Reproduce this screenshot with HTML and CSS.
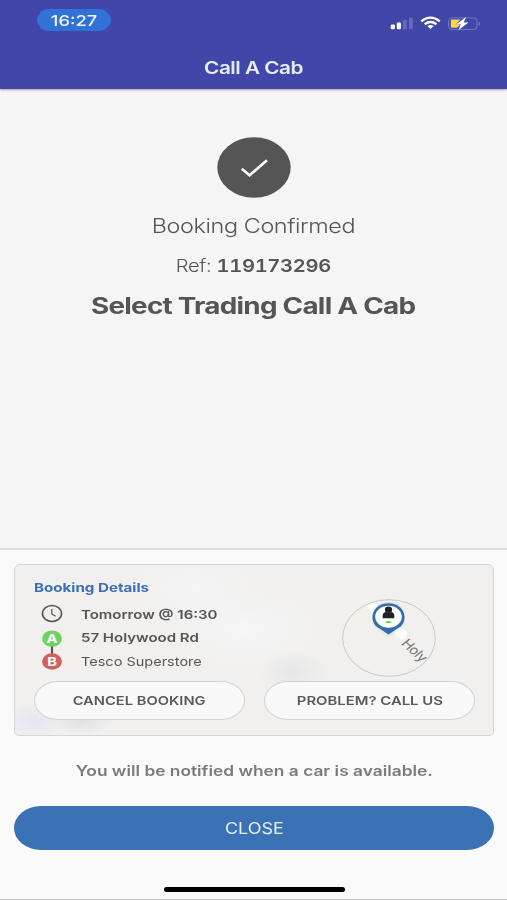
FILE: index.html
```html
<!DOCTYPE html>
<html lang="en">
<head>
<meta charset="utf-8">
<title>Call A Cab</title>
<link rel="stylesheet" href="styles.css">
</head>
<body>
<div class="screen">
  <header class="header">
    <div class="status">
      <div class="clock"><span class="wide time">16:27</span></div>
      <svg class="indicators" width="92" height="16" viewBox="0 0 92 16">
        <g fill="#fff">
          <rect x="0.7" y="9.6" width="4.2" height="4.6" rx="1.2"/>
          <rect x="6.800" y="7.6" width="4.2" height="6.600" rx="1.2"/>
          <rect x="13" y="5" width="3.8" height="9.2" rx="1" opacity=".2"/>
          <rect x="19" y="2.400" width="3.800" height="11.8" rx="1" opacity=".2"/>
        </g>
        <g fill="none" stroke="#fff" stroke-width="2.3">
          <path d="M31.2 6.3Q40.500 -1 49.800 6.3"/>
          <path d="M34.600 9.2Q40.500 4.9 46.400 9.2"/>
        </g>
        <path d="M37.3 11Q40.500 8.9 43.700 11L40.500 13.9Z" fill="#fff"/>
        <rect x="58.500" y="2.9" width="28.5" height="11.6" rx="3.5" fill="none" stroke="#7075bf"/>
        <path d="M88.500 6.6q3.6 2.1 0 4.2z" fill="#7075bf"/>
        <path d="M62 4.600H70.500L66 9.300L70 10L67 12.800H62q-1.200 0-1.200-1.200V5.800q0-1.200 1.200-1.200z" fill="#fbd34c"/>
        <path d="M76 2L66 9.600H70.800L68.500 14.900L78.500 7.400H73.800Z" fill="#fff"/>
      </svg>
    </div>
    <h1 class="title"><span class="wide title-text">Call A Cab</span></h1>
  </header>

  <main class="confirmation">
    <svg class="tick" width="74" height="61" viewBox="0 0 74 61">
      <ellipse cx="37" cy="30.500" rx="36.700" ry="30.200" fill="#555"/>
      <path d="M24.800 31.800L32.500 38.300L50 23.300" fill="none" stroke="#fff" stroke-width="2.600"/>
    </svg>
    <p class="confirmed"><span class="wide confirmed-text">Booking Confirmed</span></p>
    <p class="ref"><span class="wide ref-text">Ref: <b>119173296</b></span></p>
    <h2 class="company"><span class="wide company-text">Select Trading Call A Cab</span></h2>
  </main>

  <section class="panel">
    <div class="card">
      <h3 class="heading"><span class="wide heading-text">Booking Details</span></h3>
      <div class="summary">
        <svg class="route" width="22" height="68" viewBox="0 0 22 68">
          <ellipse cx="11" cy="9.500" rx="9.600" ry="8" fill="none" stroke="#555" stroke-width="1.700"/>
          <path d="M10.800 5V10L14.600 12.200" fill="none" stroke="#555" stroke-width="1.300"/>
          <path d="M11 40V52" stroke="#555" stroke-width="2.200"/>
          <ellipse cx="11" cy="34.600" rx="9.900" ry="8.200" fill="#6fd263"/>
          <ellipse cx="11" cy="57.500" rx="9.900" ry="8.200" fill="#d45d60"/>
          <g class="stop" text-anchor="middle" fill="#fff">
            <text transform="translate(11 39) scale(1.22 1)">A</text>
            <text transform="translate(11 62) scale(1.22 1)">B</text>
          </g>
        </svg>
        <div class="lines">
          <div><span class="wide when">Tomorrow @ 16:30</span></div>
          <div><span class="wide pickup">57 Holywood Rd</span></div>
          <div><span class="wide dropoff">Tesco Superstore</span></div>
        </div>
        <svg class="map" width="94" height="78" viewBox="0 0 94 78">
          <defs>
            <clipPath id="lens"><ellipse cx="47" cy="39" rx="46.300" ry="38.300"/></clipPath>
            <filter id="soft" x="-30%" y="-30%" width="160%" height="160%"><feGaussianBlur stdDeviation="1.500"/></filter>
          </defs>
          <g clip-path="url(#lens)">
            <path d="M21 -1L63 38" stroke="#fcfcfd" stroke-width="9"/>
          </g>
          <text class="road" transform="translate(58.500 45) scale(1.180 1) rotate(47)">Holy</text>
          <ellipse cx="47" cy="39" rx="46.300" ry="38.300" fill="none" stroke="#c9c9c9"/>
          <path d="M46.500 37L32.500 26Q27.500 4 46.500 4Q65.500 4 60.500 26Z" fill="#aab" opacity=".4" filter="url(#soft)"/>
          <path d="M46.500 35.500L38 29.700C33 27.500 30.500 23.500 30.500 18.300C30.500 10.200 37.500 4.300 46.500 4.300S62.500 10.200 62.500 18.300C62.500 23.500 60 27.500 55 29.700Z" fill="#326cb0"/>
          <ellipse cx="46.500" cy="17.700" rx="13.300" ry="11" fill="#fff"/>
          <ellipse cx="46.500" cy="10.700" rx="3.600" ry="3.200" fill="#222"/>
          <path d="M40.700 19.300V16.500Q40.700 13 44.500 13Q46.500 14.500 48.500 13Q52.300 13 52.300 16.500V19.300Z" fill="#222"/>
          <path d="M43 24Q46.500 19.700 50 24Z" fill="#5fe246"/>
        </svg>
      </div>
      <div class="actions">
        <button class="action"><span class="wide cancel">CANCEL BOOKING</span></button>
        <button class="action"><span class="wide problem">PROBLEM? CALL US</span></button>
      </div>
    </div>
    <p class="notice"><span class="wide notice-text">You will be notified when a car is available.</span></p>
    <button class="close"><span class="wide close-text">CLOSE</span></button>
    <div class="home-bar"></div>
  </section>
</div>
</body>
</html>
```
FILE: styles.css
```css
* { box-sizing: border-box; margin: 0; padding: 0; }

body {
  font-family: Inter, "Liberation Sans", sans-serif;
  color: #555;
  background: #f5f5f5;
}

.screen {
  width: 507px;
  height: 900px;
  display: flex;
  flex-direction: column;
  overflow: hidden;
}

/* The typeface is set in an extended width throughout. */
.wide {
  display: inline-block;
  white-space: nowrap;
  transform: scaleX(1.22);
}

.header {
  height: 89px;
  flex: none;
  background: #4147a9;
  color: #fff;
  box-shadow: 0 1px 2px rgba(0, 0, 0, .35);
}

.status {
  display: flex;
  justify-content: space-between;
  padding: 9px 25px 0 37px;
  height: 55px;
}

.clock {
  width: 74px;
  height: 22px;
  border-radius: 13px / 11px;
  background: #3072d7;
  text-align: center;
  line-height: 22px;
}

.time { font-size: 15px; font-weight: 500; color: #f0f5ff; }
.indicators { margin-top: 6px; }
.title { text-align: center; line-height: 27px; font-size: 17px; }
.title-text { font-weight: 600; color: #e8edff; letter-spacing: -.4px; }

.confirmation {
  height: 459px;
  flex: none;
  display: flex;
  flex-direction: column;
  align-items: center;
  padding-top: 48px;
}

.confirmed { margin-top: 13px; height: 30px; line-height: 30px; font-size: 19.700px; font-weight: 300; letter-spacing: -.35px; }
.confirmed-text { transform: scaleX(1.19); }
.ref { margin-top: 10px; height: 30px; line-height: 30px; font-size: 17.500px; font-weight: 300; letter-spacing: -.3px; }
.ref b { font-weight: 600; font-variant-numeric: tabular-nums; }
.ref-text { transform: scaleX(1.152); }
.company { margin-top: 9px; height: 32px; line-height: 32px; font-size: 22.500px; font-weight: 700; letter-spacing: -.6px; }
.company-text { transform: scaleX(1.237); }

.panel {
  flex: 1;
  display: flex;
  flex-direction: column;
  padding: 14px 13px 0 14px;
  background: #fafafa;
  border-top: 2px solid #dcdcdc;
  border-bottom: 1px solid #c8c8c8;
}

.card {
  height: 172px;
  flex: none;
  padding: 13px 19px 0;
  border: 1.500px solid #d5d5d5;
  border-radius: 6px 6px 5px 5px;
  background:
    radial-gradient(ellipse 32px 18px at 18px 156px, #e3e5f2, transparent),
    radial-gradient(ellipse 30px 14px at 66px 156px, #dfe0e3, transparent),
    radial-gradient(ellipse 34px 22px at 278px 108px, #e6e6e6, transparent),
    radial-gradient(ellipse 75px 38px at 230px 64px, #f6f6f6, transparent),
    radial-gradient(ellipse 60px 35px at 178px 24px, #f5f5f5, transparent),
    #f1f0ef;
}

.heading { height: 20px; line-height: 20px; font-size: 12.300px; }
.heading-text { color: #3b70b7; font-weight: 700; transform: scaleX(1.230); transform-origin: left; }

.summary { display: flex; height: 82px; }
.route { margin-left: 7px; margin-top: 6px; flex: none; }
.stop { font-size: 12px; font-weight: 700; }
.lines { margin-left: 17.500px; width: 261px; flex: none; padding-top: 4.500px; font-size: 12.300px; line-height: 23.600px; }
.lines .wide { transform-origin: left; }
.when, .pickup { font-weight: 600; }
.lines .when { transform: scaleX(1.220); }
.lines .pickup { transform: scaleX(1.220); }
.lines .dropoff { transform: scaleX(1.180); }
.map { margin-top: 1px; flex: none; overflow: visible; }
.road { font-size: 12.500px; fill: #777; letter-spacing: -.3px; }

.actions { display: flex; gap: 19px; margin-top: 1px; }
.action {
  width: 211px;
  height: 39px;
  flex: none;
  border: 1.500px solid #d3d3d3;
  border-radius: 24px / 19.500px;
  background: #f9f9f9;
  color: #5a5a5a;
  font: 600 12.200px Inter, sans-serif;
}
.cancel { transform: scaleX(1.206); }
.problem { transform: scaleX(1.220); }

.notice { margin-top: 21px; height: 28px; line-height: 28px; text-align: center; font-size: 14px; font-weight: 600; color: #7b7b7b; }
.notice-text { transform: scaleX(1.238); }

.close {
  margin-top: 21px;
  height: 44px;
  flex: none;
  border: 0;
  border-radius: 27px / 22px;
  background: #3b71b5;
  color: #e3f1ff;
  font: 400 15.500px Inter, sans-serif;
}
.close-text { transform: scaleX(1.160); }

.home-bar { align-self: center; margin-top: 37px; width: 181px; height: 5px; border-radius: 3px; background: #000; }
```
